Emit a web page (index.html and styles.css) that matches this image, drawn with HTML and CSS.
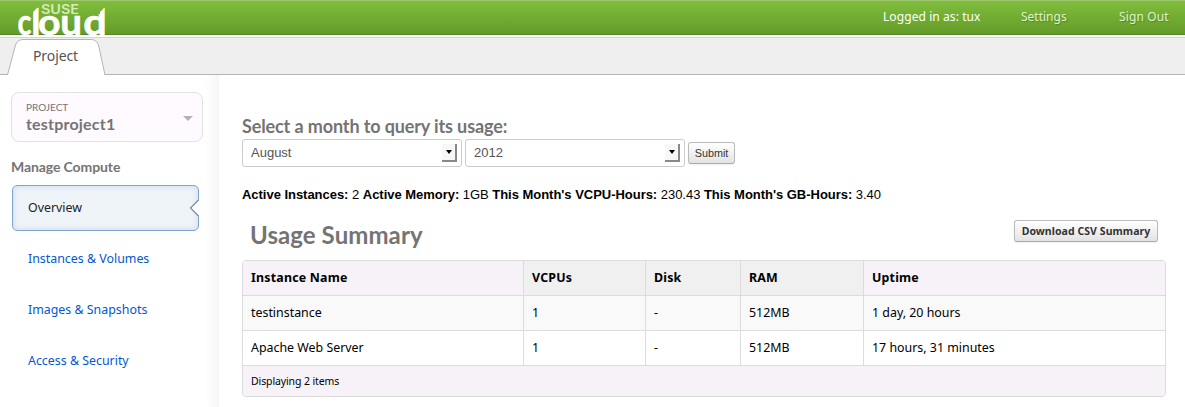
FILE: index.html
```html
<!DOCTYPE html>
<html lang="en">
<head>
<meta charset="utf-8">
<title>Usage Overview - SUSE Cloud</title>
<link rel="stylesheet" href="styles.css">
</head>
<body>
<header class="topbar">
  <svg class="logo" width="90" height="34" viewBox="0 0 90 34" role="img" aria-label="SUSE Cloud">
    <defs><clipPath id="cut"><path d="M0 13H15V11L21 5V13H82V11L88 5V34H0Z"/></clipPath></defs>
    <text class="logo-suse" x="23" y="13" textLength="38" lengthAdjust="spacingAndGlyphs">SUSE</text>
    <g class="logo-cloud" clip-path="url(#cut)">
      <text transform="translate(-0.6 33.5) scale(.78 1)">c</text>
      <text transform="translate(13.2 33.5)">l</text>
      <text transform="translate(20 33.5) scale(1.06 1)">o</text>
      <text transform="translate(42.2 33.5) scale(1.04 1)">u</text>
      <text transform="translate(65.2 33.5) scale(1.12 1)">d</text>
    </g>
  </svg>
  <nav class="user-nav">
    <span class="user">Logged in as: tux</span>
    <a class="settings" href="#">Settings</a>
    <a class="signout" href="#">Sign Out</a>
  </nav>
</header>
<div class="tabs">
  <div class="tab">
    <svg class="tab-shape" width="100" height="37" viewBox="0 0 100 37"><path d="M0.5 37 L8.5 7 Q10.5 1.5 16 1.5 H84 Q89.5 1.5 91.5 7 L98 37" fill="#fff" stroke="#b5b5b0"/></svg>
    <span class="tab-label">Project</span>
  </div>
</div>
<div class="body">
  <aside class="sidebar">
    <div class="project">
      <div><div class="project-label">PROJECT</div><div class="project-name">testproject1</div></div>
      <svg class="caret" width="10" height="5" viewBox="0 0 10 5"><path d="M0 0H10L5 5Z" fill="#b4b2b8"/></svg>
    </div>
    <h4 class="side-title">Manage Compute</h4>
    <ul class="menu">
      <li class="active"><a href="#">Overview</a>
        <svg class="notch" width="10" height="18" viewBox="0 0 10 18"><path d="M10 1L1.5 9L10 17Z" fill="#fff"/><path d="M9.5 1L1.5 9L9.5 17" fill="none" stroke="#7b8ba3" stroke-width="1.2"/></svg></li>
      <li><a href="#">Instances &amp; Volumes</a></li>
      <li><a href="#">Images &amp; Snapshots</a></li>
      <li><a href="#">Access &amp; Security</a></li>
    </ul>
  </aside>
  <main class="main">
    <h3 class="query-title">Select a month to query its usage:</h3>
    <form class="query">
      <div class="select"><span>August</span><span class="arrow"></span></div>
      <div class="select"><span>2012</span><span class="arrow"></span></div>
      <button type="button" class="btn submit">Submit</button>
    </form>
    <p class="stats"><b>Active Instances:</b> 2 <b>Active Memory:</b> 1GB <b>This Month's VCPU-Hours:</b> 230.43 <b>This Month's GB-Hours:</b> 3.40</p>
    <div class="summary-head">
      <h2>Usage Summary</h2>
      <button type="button" class="btn download">Download CSV Summary</button>
    </div>
    <table class="usage">
      <colgroup><col class="c1"><col class="c2"><col class="c3"><col class="c4"><col class="c5"></colgroup>
      <thead><tr><th class="tint">Instance Name</th><th>VCPUs</th><th>Disk</th><th>RAM</th><th class="tint">Uptime</th></tr></thead>
      <tbody>
        <tr class="odd"><td>testinstance</td><td>1</td><td>-</td><td>512MB</td><td>1 day, 20 hours</td></tr>
        <tr><td>Apache Web Server</td><td>1</td><td>-</td><td>512MB</td><td>17 hours, 31 minutes</td></tr>
      </tbody>
      <tfoot><tr><td colspan="5">Displaying 2 items</td></tr></tfoot>
    </table>
  </main>
</div>
</body>
</html>
```
FILE: styles.css
```css
* { box-sizing: border-box; }
body { margin: 0; height: 407px; overflow: hidden; background: #fff; color: #000; font: 12.5px/18px "Noto Sans", sans-serif; }
a { color: #0257d5; text-decoration: none; }
h2, h3, h4, p, ul { margin: 0; padding: 0; }

.topbar { height: 35px; display: flex; justify-content: space-between; background: linear-gradient(#80bd3c, #639c29); border-top: 1px solid #9cc76c; border-bottom: 1px solid #568725; }
.logo { margin-left: 18px; display: block; overflow: visible; }
.logo-suse { font: 600 12.5px Inter, sans-serif; fill: #d5ecb5; }
.logo-cloud { font: 700 37px Lato, sans-serif; fill: #fff; stroke: #fff; stroke-width: .6px; }
.user-nav { display: flex; padding-top: 7px; font-size: 12px; }
.user { width: 138px; color: #fff; letter-spacing: .08px; }
.settings { width: 98px; color: #e0f2c8; text-shadow: 1px 1px 1px #56872a; }
.signout { width: 66px; color: #e0f2c8; letter-spacing: .12px; text-shadow: 1px 1px 1px #56872a; }

.tabs { margin-top: 2px; height: 38px; padding-left: 7px; background: #efefef; border-top: 1px solid #d5d5d5; border-bottom: 1px solid #b5b5b5; }
.tab { position: relative; width: 100px; height: 37px; }
.tab-shape { position: absolute; left: 0; top: 0; }
.tab-label { position: relative; display: block; padding: 9px 0 0 26px; font-size: 14px; letter-spacing: -.1px; color: #555; }

.body { display: flex; height: 332px; }
.sidebar { width: 219px; padding: 17px 0 0 11px; background: linear-gradient(to right, #fff 205px, #f6f6f6 219px); }
.project { width: 192px; height: 50px; padding: 0 9px 0 14px; display: flex; justify-content: space-between; background: #fefaff; border: 1px solid #e4e1e5; border-radius: 8px; color: #747474; font-family: Lato, sans-serif; }
.project-label { padding-top: 8px; font-size: 10px; line-height: 13px; }
.project-name { margin-top: -1px; font-size: 16px; line-height: 21px; font-weight: 700; letter-spacing: .2px; }
.caret { margin-top: 23px; }
.side-title { margin: 16px 0 9px; font: 700 14px/18px Lato, sans-serif; letter-spacing: -.1px; color: #747474; }
.menu { list-style: none; }
.menu li { height: 51px; padding: 14px 0 0 17px; font-size: 12.4px; }
.menu .active { position: relative; width: 187px; height: 46px; margin: 0 0 5px 1px; padding: 13px 0 0 15px; border: 1px solid #83a4d3; border-radius: 5px; background: #eff4f9; box-shadow: inset 0 0 6px #c6d7ea; }
.active a { color: #222; }
.notch { position: absolute; right: -1px; top: 13px; }

.main { width: 966px; padding: 41px 19px 0 23px; }
.query-title { font: 700 18px/20px Lato, sans-serif; letter-spacing: -.12px; color: #747474; }
.query { display: flex; align-items: center; gap: 3px; margin-top: 3px; }
.select { width: 220px; height: 28px; padding: 0 4px 0 8px; display: flex; align-items: center; justify-content: space-between; border: 1px solid #ccc; border-radius: 3px; color: #555; font: 13px/18px "Liberation Sans", Arial, sans-serif; }
.arrow { width: 15px; height: 18px; display: flex; align-items: center; justify-content: center; background: #f7f7f7; border: solid #888; border-width: 0 2px 2px 0; }
.arrow::before { content: ""; border: solid transparent; border-width: 4px 3.5px 0; border-top-color: #000; }
.btn { height: 22px; padding: 0; border: 1px solid #bbb; border-bottom-color: #aaa; border-radius: 3px; background: linear-gradient(#fff, #e3e3e3); box-shadow: 0 1px 2px #0001; color: #333; }
.submit { width: 47px; font: 10.8px/18px "Liberation Sans", Arial, sans-serif; }
.stats { margin-top: 19px; font: 13px/18px "Liberation Sans", Arial, sans-serif; letter-spacing: -.03px; white-space: nowrap; }
.summary-head { display: flex; justify-content: space-between; height: 56px; padding: 16px 8px 0; }
.summary-head h2 { font: 700 24px/30px Lato, sans-serif; letter-spacing: .08px; color: #747474; }
.download { width: 144px; font: 700 10.5px/18px "Noto Sans", sans-serif; letter-spacing: .07px; white-space: nowrap; }

.usage { width: 924px; table-layout: fixed; border-collapse: separate; border-spacing: 0; border: 1px solid #dcdcdc; border-radius: 4px; overflow: hidden; }
.c1 { width: 280px; }
.c2 { width: 122px; }
.c3 { width: 95px; }
.c4 { width: 123px; }
.usage th, .usage td { height: 35px; padding: 0 8px; text-align: left; border-left: 1px solid #dcdcdc; border-bottom: 1px solid #dcdcdc; font-size: 12.4px; }
.usage th { background: #f0f0f0; letter-spacing: .2px; }
.usage th:first-child, .usage td:first-child { border-left: 0; }
.usage th.tint { background: #f7f2f7; }
.odd td { background: #f9f9f9; }
.usage tfoot td { height: 30px; border-bottom: 0; background: #f7f2f7; font-size: 10.5px; letter-spacing: -.12px; }
```
